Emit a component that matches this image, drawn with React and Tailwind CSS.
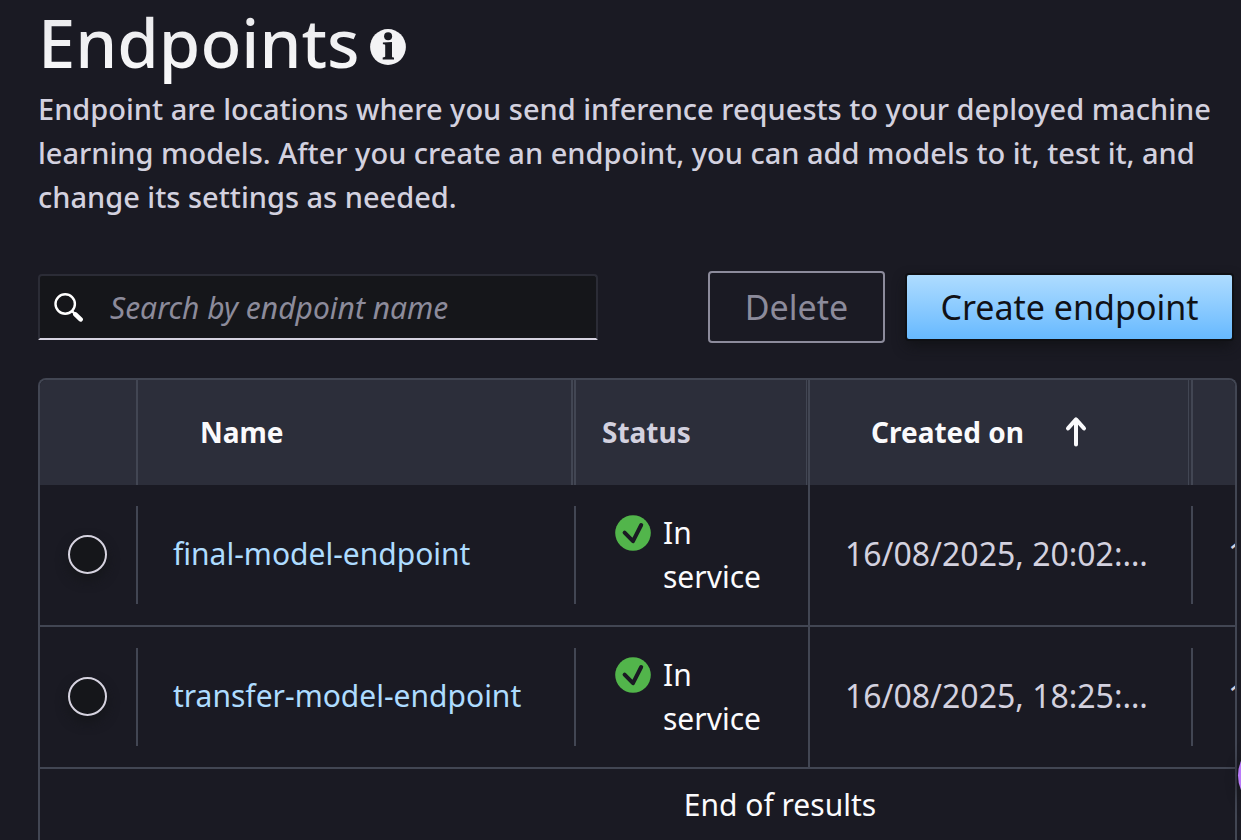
const endpoints = [
  { name: "final-model-endpoint", status: "In service", created: "16/08/2025, 20:02:…", updated: "16/08/2025, 20:06:…" },
  { name: "transfer-model-endpoint", status: "In service", created: "16/08/2025, 18:25:…", updated: "16/08/2025, 18:29:…" },
];

function InfoIcon() {
  return (
    <svg viewBox="0 0 36 36" className="size-9" aria-hidden="true">
      <circle cx="18" cy="18" r="17.9" fill="#f3f3f5" />
      <circle cx="18.1" cy="7.2" r="4" fill="#1a1b22" />
      <path d="M12.9 13.6 L22 12.9 V27.4 C22 28 22.6 28.3 24 28.4 V30.6 H12.7 V28.4 C14.6 28.3 15.2 28 15.2 27.2 V16.4 C15.2 15.6 14.6 15.4 12.9 15.3 Z" fill="#1a1b22" />
    </svg>
  );
}

function SearchIcon() {
  return (
    <svg viewBox="0 0 30 30" className="size-[30px] shrink-0" fill="none" stroke="#fff" aria-hidden="true">
      <circle cx="11.2" cy="12" r="9.7" strokeWidth="2.4" />
      <path d="M17.6 18.6 L21 22" strokeWidth="2.4" />
      <path d="M21.4 22.4 L26.6 27.4" strokeWidth="4.6" strokeLinecap="round" />
    </svg>
  );
}

function CheckIcon() {
  return (
    <svg viewBox="0 0 36 36" className="size-9 shrink-0" fill="none" aria-hidden="true">
      <circle cx="18" cy="18" r="17.8" fill="#52b54b" />
      <path d="M9.6 17.6 L18 26.2 L26.2 10" stroke="#1a1a23" strokeWidth="4" strokeLinecap="round" strokeLinejoin="round" />
    </svg>
  );
}

function SortArrow() {
  return (
    <svg viewBox="0 0 20 30" className="h-[30px] w-5 overflow-visible" fill="none" stroke="#fafafc" strokeWidth="4" strokeLinecap="round" strokeLinejoin="round" aria-hidden="true">
      <path d="M10 3 V27.6 M2 11.4 L10 2.4 L18 11.4" />
    </svg>
  );
}

function EndpointRow({ endpoint }) {
  return (
    <tr>
      <td className="border-b-2 border-[#424653] py-[21px]">
        <div className="flex h-[98px] items-center border-r-2 border-[#424653] pb-0.5 pl-7">
          <input
            type="radio"
            name="endpoint"
            aria-label={endpoint.name}
            className="size-[39px] appearance-none rounded-full border-2 border-[#d6d3e0] bg-[#15161a] shadow-[0_6px_12px_#15161a]"
          />
        </div>
      </td>
      <td className="border-b-2 border-[#424653] py-[21px]">
        <div className="flex h-[98px] items-center border-r-2 border-[#424653] pb-0.5 pl-[35px]">
          <a href="#endpoint" className="text-[#aedcff]">{endpoint.name}</a>
        </div>
      </td>
      <td className="border-r-2 border-b-2 border-[#424653] pr-6 pl-[39px]">
        <div className="flex items-start gap-3 text-[#fbfbfd]">
          <span className="flex h-11 items-center"><CheckIcon /></span>
          <span>{endpoint.status}</span>
        </div>
      </td>
      <td className="border-b-2 border-[#424653] py-[21px]">
        <div className="flex h-[98px] items-center border-r-2 border-[#424653] pb-0.5 pl-[35px] text-[32px] whitespace-nowrap">{endpoint.created}</div>
      </td>
      <td className="border-b-2 border-[#424653] py-[21px]">
        <div className="flex h-[98px] items-center pb-0.5 pl-[35px] text-[32px] whitespace-nowrap">{endpoint.updated}</div>
      </td>
    </tr>
  );
}

export default function App() {
  return (
    <main className="relative flex h-screen flex-col overflow-hidden bg-[#1a1a23] pr-1 pl-[38px] font-['Noto_Sans',sans-serif] text-[#d3d1df]">
      <header>
        <div className="flex h-[87px] items-center gap-2.5 pb-1">
          <h1 className="bg-linear-to-b from-[#e6e6e9] to-[#fbfbfc] bg-clip-text text-[67px] leading-[88px] font-medium text-transparent">Endpoints</h1>
          <button type="button" aria-label="About endpoints" className="mt-2.5"><InfoIcon /></button>
        </div>
        <p className="max-w-[1190px] text-[29px] leading-11 font-medium">
          Endpoint are locations where you send inference requests to your deployed machine learning models. After you create an endpoint, you can add models to it, test it, and change its settings as needed.
        </p>
      </header>

      <div className="mt-[52px] flex items-center justify-between pr-[5px]">
        <label className="flex h-[66px] w-[560px] items-center gap-[26px] rounded-t border-2 border-[#2b2c36] border-b-[#d6d3e0] bg-[#15161a] pr-4 pl-[14px]">
          <SearchIcon />
          <input
            type="search"
            aria-label="Search by endpoint name"
            placeholder="Search by endpoint name"
            className="min-w-0 flex-1 bg-transparent text-[30px] italic outline-none placeholder:text-[#8c8b9b] placeholder:opacity-100"
          />
        </label>
        <div className="flex items-center gap-[22px] text-[34px]">
          <button type="button" disabled className="flex h-[72px] w-[177px] items-center justify-center rounded border-2 border-[#8c8b9b] text-[#8c8b9b]">Delete</button>
          <button type="button" className="flex h-16 w-[325px] items-center justify-center rounded-xs bg-linear-to-b from-[#aedcff] to-[#66b9ff] whitespace-nowrap text-[#101116] shadow-[0_0_0_2px_#0f1014,0_6px_14px_#111216]">Create endpoint</button>
        </div>
      </div>

      <div className="mt-[35px] flex-1 overflow-hidden rounded-t-lg border-2 border-b-0 border-[#424653]">
        <table className="w-[1480px] table-fixed border-separate border-spacing-0 text-left text-[30px] leading-11">
          <colgroup>
            <col className="w-[98px]" />
            <col className="w-[438px]" />
            <col className="w-[234px]" />
            <col className="w-[383px]" />
            <col />
          </colgroup>
          <thead className="bg-[#2c2e3a] text-[28px] text-[#fafafc]">
            <tr>
              <th scope="col" aria-label="Selection" className="p-0">
                <div className="h-[105px] border-r-2 border-[#424653]" />
              </th>
              <th scope="col" className="p-0">
                <div className="flex h-[105px] items-center border-r-2 border-[#424653] pr-px">
                  <div className="flex h-full flex-1 items-center border-r-2 border-[#424653] pb-0.5 pl-[62px]">
                    <button type="button">Name</button>
                  </div>
                </div>
              </th>
              <th scope="col" className="p-0 text-[#d3d1df]">
                <div className="flex h-[105px] items-center border-r-2 border-[#424653] pr-px">
                  <div className="flex h-full flex-1 items-center border-r border-[#424653] pb-0.5 pl-[26px]">Status</div>
                </div>
              </th>
              <th scope="col" aria-sort="ascending" className="p-0">
                <div className="flex h-[105px] items-center border-r-2 border-[#424653] pr-0.5">
                  <div className="flex h-full flex-1 items-center border-r border-[#424653] pb-0.5 pl-[61px]">
                    <button type="button" className="flex items-center gap-[42px]">Created on <SortArrow /></button>
                  </div>
                </div>
              </th>
              <td className="p-0" />
            </tr>
          </thead>
          <tbody>
            {endpoints.map((endpoint) => <EndpointRow key={endpoint.name} endpoint={endpoint} />)}
          </tbody>
          <tfoot>
            <tr>
              <td colSpan="5" className="py-[14px] text-center text-[30px] text-[#fbfbfd]">End of results</td>
            </tr>
          </tfoot>
        </table>
      </div>

      <button type="button" aria-label="Assistant" className="absolute -right-[70px] bottom-7 size-[73px] rounded-full bg-[#b97af8] shadow-[0_4px_12px_#16171b]" />
    </main>
  );
}
